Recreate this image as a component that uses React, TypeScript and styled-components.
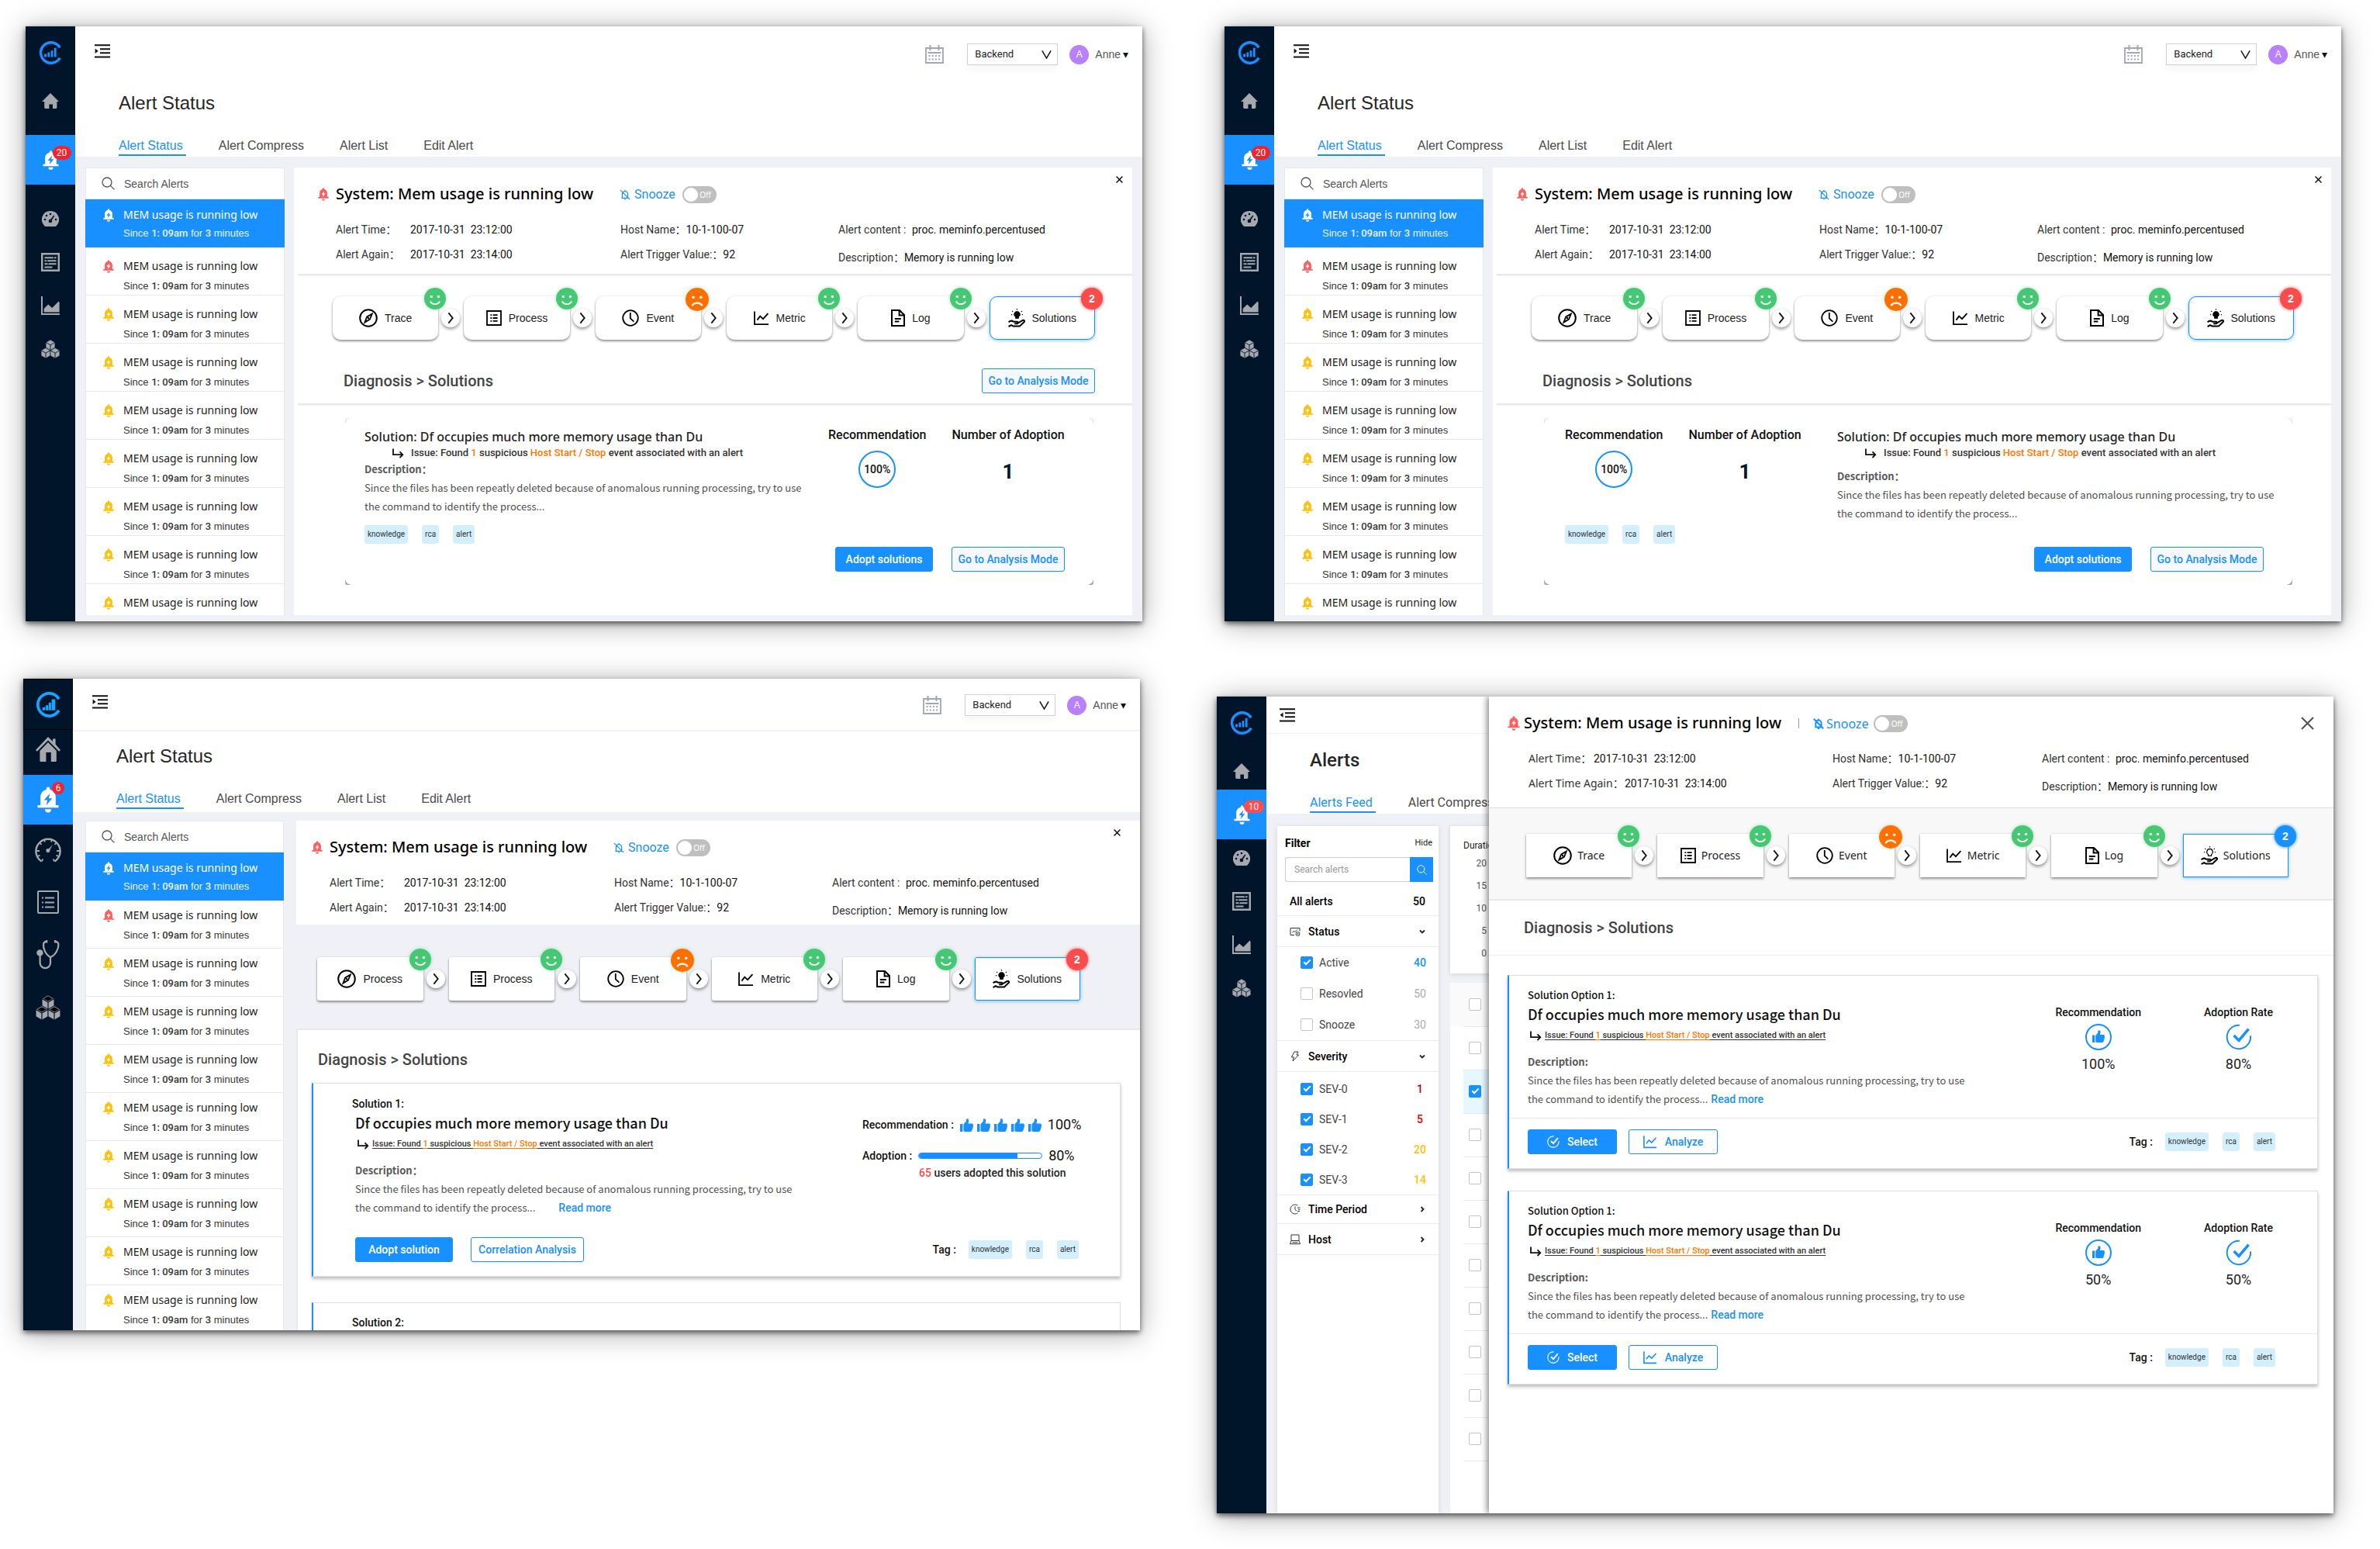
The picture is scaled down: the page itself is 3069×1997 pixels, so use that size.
import React from "react";
import styled, { createGlobalStyle, css } from "styled-components";

const arial = `"Liberation Sans", Arial, "Noto Sans CJK SC", sans-serif`;
const roboto = `Roboto, "Noto Sans CJK SC", sans-serif`;
const noto = `"Noto Sans", "Noto Sans CJK SC", sans-serif`;
const cjk = `"Noto Sans CJK SC", sans-serif`;

const c = {
  blue: "#1890ff",
  navy: "#001529",
  grey: "#eff1f6",
  line: "#e8e8e8",
  icon: "#a5a9ae",
  green: "#46c773",
  orange: "#ff7800",
  red: "#f94c4c",
  bellRed: "#fb5f5f",
  amber: "#ffc107",
  tag: "#d3effd",
};

const GlobalStyle = createGlobalStyle`
  *, *::before, *::after { box-sizing: border-box; }
  body { margin: 0; background: #fff; color: #222; font-family: ${roboto}; font-size: 14px; }
  h1, h2, h3, p, ul, ol, dl, dd { margin: 0; padding: 0; }
  ul, ol { list-style: none; }
  svg { display: block; flex: none; }
  button, input, select { font: inherit; color: inherit; margin: 0; }
  button { background: none; border: 0; padding: 0; cursor: pointer; }
  a { color: inherit; text-decoration: none; }
`;

/* ---------- icons ---------- */

type IconProps = { size?: number; color?: string; cut?: string };

const BOLT = "M13.6 6.2 8.2 12.4h3.2l-1.1 4.8 5.5-6.5h-3.2z";

const Bell = ({ size = 18, color = c.bellRed, cut = "#fff" }: IconProps) => (
  <svg width={Math.round((size * 20) / 24)} height={size} viewBox="2 0 20 24" aria-hidden="true">
    <path fill={color} d="M12 .3a1.6 1.6 0 0 1 1.6 1.6v.8C17 3.4 19 6.1 19 9.4V17h2.6v2.4H2.4V17H5V9.4c0-3.3 2-6 5.4-6.7v-.8A1.6 1.6 0 0 1 12 .3z" />
    <path fill={color} d="M9 20.8h6a3 3 0 0 1-6 0z" />
    <path fill={cut} d={BOLT} />
  </svg>
);

const Logo = ({ size = 30, color = c.blue, solid = false }: IconProps & { solid?: boolean }) => (
  <svg width={size} height={size} viewBox="0 0 30 30" aria-hidden="true">
    <path d="M27.2 8.4A13.2 13.2 0 1 0 27.2 21.6" fill="none" stroke={color} strokeWidth="3.4" />
    {solid ? (
      <path fill={color} d="M8 18h3.4v-2.4h3.6v-3.2h3.4V8.6H23V21.6H8z" />
    ) : (
      <path fill={color} d="M7.2 16.4h2.8v4H7.200zM11.4 14.6h2.8v5.8h-2.800zM15.6 12.200h2.8v8.200h-2.800zM19.800 8.800h2.800v11.600h-2.800z" />
    )}
    {solid && <path stroke={c.navy} strokeWidth=".6" d="M11.500 15v7M15.100 12v10M18.500 8v14" />}
  </svg>
);

const HomeIcon = () => (
  <svg width="22" height="20" viewBox="0 0 22 20" fill={c.icon} aria-hidden="true">
    <path d="M11 0 22 11h-2.6v7.6c0 .8-.6 1.4-1.4 1.4h-4v-5.6H9.4V20H4.6c-.8 0-1.4-.6-1.4-1.4V11H0z" />
  </svg>
);

const BigHomeIcon = () => (
  <svg width="32" height="32" viewBox="0 0 32 32" fill={c.icon} aria-hidden="true">
    <path d="M16 0 22 6V2.6h3.6V9.6L32 17l-1.8 1.8L16 4.4 1.8 18.8 0 17z" />
    <path d="M16 7 26.8 18v12.4c0 1-.6 1.6-1.6 1.6h-5.4V20h-6.4v12H7c-1 0-1.6-.6-1.6-1.6V18z" />
  </svg>
);

const DashIcon = () => (
  <svg width="22" height="20" viewBox="0 0 22 20" aria-hidden="true">
    <path fill={c.icon} d="M11 0a11 11 0 0 1 8.4 18.2c-.8 1.2-1.6 1.8-2.6 1.8H5.2c-1 0-1.8-.6-2.6-1.8A11 11 0 0 1 11 0z" />
    <g fill={c.navy}>
      <circle cx="11" cy="4" r="1.3" />
      <circle cx="6" cy="6" r="1.3" />
      <circle cx="4" cy="11" r="1.3" />
      <circle cx="18" cy="11" r="1.3" />
      <path d="m15.2 5.4 1.2.9-3.6 5.6a2.2 2.2 0 1 1-1.6-1.1z" />
    </g>
  </svg>
);

const ReportIcon = () => (
  <svg width="24" height="24" viewBox="0 0 24 24" aria-hidden="true">
    <path d="M1.2 1.2h21.6v21.6H1.2z" fill="none" stroke={c.icon} strokeWidth="2.4" />
    <path d="M4.5 6.2h15M4.5 10.2h15M4.5 14.2h15M4.5 18.4h10" stroke={c.icon} strokeWidth="2" />
    <path d="M16.4 5v2.4M9 13v2.4M7.6 9v2.4" stroke={c.navy} strokeWidth="1" />
  </svg>
);

const AreaIcon = () => (
  <svg width="24" height="24" viewBox="0 0 24 24" aria-hidden="true">
    <path d="M1 0v23h23" fill="none" stroke={c.icon} strokeWidth="2" />
    <path fill={c.icon} d="M3.6 20.6V16l5.6-5.4 5 4.4L22.6 6.4 23.6 8v12.6z" />
  </svg>
);

const cube = (x: number, y: number, r: number) => {
  const w = r * 0.87;
  return {
    hex: `M${x} ${y - r}L${x + w} ${y - r / 2}V${y + r / 2}L${x} ${y + r}L${x - w} ${y + r / 2}V${y - r / 2}z`,
    ribs: `M${x} ${y + r}V${y}L${x + w} ${y - r / 2}M${x} ${y}L${x - w} ${y - r / 2}`,
    top: `M${x} ${y - r + 1}L${x + w - 1.5} ${y - r / 2}L${x} ${y - 1}L${x - w + 1.5} ${y - r / 2}z`,
  };
};

const CubesIcon = ({ size = 24, dark = false }: { size?: number; dark?: boolean }) => (
  <svg width={size} height={size} viewBox="0 0 24 24" aria-hidden="true">
    {[cube(12, 6.8, 6.8), cube(6, 17.2, 6.8), cube(18, 17.2, 6.8)].map((q, i) => (
      <g key={i}>
        <path d={q.hex} fill={c.icon} stroke={c.navy} strokeWidth=".6" />
        <path d={q.ribs} fill="none" stroke={c.navy} strokeWidth=".9" />
        {dark && <path d={q.top} fill="#000" />}
      </g>
    ))}
  </svg>
);

const GaugeIcon = () => (
  <svg width="34" height="34" viewBox="0 0 34 34" fill="none" stroke={c.icon} strokeWidth="2.4" aria-hidden="true">
    <path d="M8.5 32.5a15.6 15.6 0 1 1 17 0" />
    <path d="M8.5 32.6l2-3M25.5 32.6l-2-3M2 19h4M32 19h-4M6 8.5l2.6 2.4M28 8.5l-2.6 2.4M12 4.5l1 3M22 4.5l-1 3M3.5 26l3-1.4M30.5 26l-3-1.4" strokeWidth="1.8" />
    <path d="m23 11-5 5.2a2.6 2.6 0 1 0 1.4 1.6z" fill={c.icon} stroke="none" />
  </svg>
);

const ChecklistIcon = () => (
  <svg width="28" height="30" viewBox="0 0 28 30" fill="none" stroke={c.icon} strokeWidth="2" aria-hidden="true">
    <rect x="1" y="1" width="26" height="28" rx="1" />
    <path d="M10 9.4h12M10 15.4h12M10 21.4h12M6 9.4h2M6 15.4h2M6 21.4h2" />
  </svg>
);

const StethoscopeIcon = () => (
  <svg width="30" height="38" viewBox="0 0 30 38" fill="none" stroke={c.icon} strokeWidth="2.2" aria-hidden="true">
    <circle cx="4.4" cy="16.4" r="4.2" fill={c.icon} stroke="none" />
    <path d="M4.6 20v9.4a6.6 6.6 0 0 0 13.4 0V22C11 18.6 8.6 9.4 9 5.4 9.2 3 10.6 2 13 1.6M18 22c7-2.8 10.6-11 10.4-16.4C28.2 3 26.6 2 24.2 1.6" />
    <path d="M13.2 0v3.4M24 0v3.4" />
  </svg>
);

const MenuIcon = ({ flip = false }: { flip?: boolean }) => (
  <svg width="20" height="18" viewBox="0 0 20 18" aria-hidden="true">
    <path d="M0 1.2h20M7 6.2h13M7 11.2h13M0 16.6h20" stroke="#111" strokeWidth="2" />
    <path d={flip ? "M4.6 5.6v6.4L.6 8.8z" : "M.6 5.6v6.4l4-3.2z"} fill="#111" />
  </svg>
);

const CalendarIcon = () => (
  <svg width="24" height="24" viewBox="0 0 24 24" fill="none" stroke="#a0a7b0" strokeWidth="1.8" aria-hidden="true">
    <path d="M1 4h22v19H1zM3.5 10h17" />
    <path d="M6.5 0v7M17.5 0v7" strokeWidth="2" />
    <path d="M4.5 14h15M4.5 18.500h15" strokeWidth="2" strokeDasharray="2 2.2" />
  </svg>
);

const Chevron = ({ dir = "down", size = 13 }: { dir?: "down" | "right"; size?: number }) => (
  <svg width={size} height={size} viewBox="0 0 12 12" fill="none" stroke="#111" strokeWidth="1.4" aria-hidden="true">
    <path d={dir === "down" ? "m.8 1.2 5.200 9 5.200-9" : "m4 1 4 5-4 5"} />
  </svg>
);

const SmallChevron = ({ dir }: { dir: "down" | "right" }) => (
  <svg width="8" height="8" viewBox="0 0 8 8" fill="none" stroke="#222" strokeWidth="1.8" aria-hidden="true">
    <path d={dir === "down" ? "m1 2.5 3 3 3-3" : "m2.5 1 3 3-3 3"} />
  </svg>
);

const SearchIcon = ({ size = 17, color = "#555" }: IconProps) => (
  <svg width={size} height={size} viewBox="0 0 17 17" fill="none" stroke={color} strokeWidth="1.3" aria-hidden="true">
    <circle cx="7" cy="7" r="6" />
    <path d="m11.4 11.4 5 5" />
  </svg>
);

const SnoozeIcon = ({ bold = false }: { bold?: boolean }) => (
  <svg width="14" height="14" viewBox="0 0 14 14" fill="none" stroke={c.blue} strokeWidth={bold ? 2 : 1.2} aria-hidden="true">
    <path d="M2.4 11.4h9.2M3.4 11V6.2A3.6 3.6 0 0 1 10.600 6.200V11M7 2.6V.8M5.800 13h2.400M.8.8l12.400 12.400" />
  </svg>
);

const CompassIcon = () => (
  <svg width="24" height="24" viewBox="0 0 24 24" fill="none" stroke="#000" strokeWidth="2" aria-hidden="true">
    <circle cx="12" cy="12" r="10.8" />
    <path d="M16.8 6.6 14 13.600l-6.600 4 2.800-7.200z" strokeWidth="1.8" />
    <circle cx="12" cy="12" r="1.2" fill="#000" stroke="none" />
  </svg>
);

const ProcessIcon = () => (
  <svg width="20" height="20" viewBox="0 0 20 20" fill="none" stroke="#000" strokeWidth="1.8" aria-hidden="true">
    <path d="M1 1h18v18H1z" />
    <path d="M8.6 6.2h6M8.6 10h6M8.6 13.8h6M5.4 6.2h1.8M5.4 10h1.8M5.4 13.8h1.8" />
  </svg>
);

const ClockIcon = () => (
  <svg width="22" height="22" viewBox="0 0 22 22" fill="none" stroke="#000" strokeWidth="1.8" aria-hidden="true">
    <circle cx="11" cy="11" r="9.8" />
    <path d="M10.8 4v7.4l4.6 4.2" />
  </svg>
);

const LineIcon = ({ size = 20, color = "#000" }: IconProps) => (
  <svg width={size} height={size} viewBox="0 0 20 20" fill="none" stroke={color} strokeWidth="1.8" aria-hidden="true">
    <path d="M1 1.5v16.7h18M4.4 12.6l3.8-5 3.8 3.6 6.4-7" />
  </svg>
);

const LogIcon = () => (
  <svg width="18" height="22" viewBox="0 0 18 22" fill="none" stroke="#000" strokeWidth="2" aria-hidden="true">
    <path d="M1 1h10l6 6v14H1zM10.6 1v6.4H17M4.8 12h8M4.8 15.6h5.6" />
  </svg>
);

const SolutionIcon = ({ outline = false }: { outline?: boolean }) => (
  <svg width="22" height="24" viewBox="0 0 22 24" fill="none" stroke="#000" strokeWidth="1.6" aria-hidden="true">
    <path d="M11.5 3.4a3.9 3.9 0 0 1 2 7.2v1.8h-4v-1.800a3.900 3.900 0 0 1 2-7.200z" fill={outline ? "none" : "#000"} strokeWidth={outline ? 1.2 : 0.8} />
    <path d="M11.5 0v1.6M5.2 3l1 .8M17.8 3l-1 .8M4 7.6h1.2M17.8 7.6H19" strokeWidth="1.2" />
    <path d="M.6 17.4c2-2 4.2-2.4 6.4-.6h4.4c1.6 0 1.6 2.4 0 2.4H8.2M12.4 18.6l6.4-3.6c1.8-.8 3 1 1.6 2.2L15 22.4H6.4L4 21.2.6 23" strokeWidth="2" />
  </svg>
);

const Face = ({ sad = false }: { sad?: boolean }) => (
  <svg width={sad ? 30 : 28} height={sad ? 30 : 28} viewBox="0 0 28 28" role="img" aria-label={sad ? "Unhealthy" : "Healthy"}>
    <circle cx="14" cy="14" r="14" fill={sad ? "#ff6f00" : c.green} />
    <g fill="#fff">
      <circle cx="9.2" cy="11.4" r="1.7" />
      <circle cx="18.4" cy="11.4" r="1.7" />
    </g>
    <path d={sad ? "M7.8 21.6c2.6-4.400 9.800-4.400 12.400 0" : "M7.8 17.4c2.6 4.800 9.800 4.800 12.400 0"} fill="none" stroke="#fff" strokeWidth="2" />
  </svg>
);

const ReturnIcon = () => (
  <svg width="16" height="13" viewBox="0 0 16 13" fill="none" stroke="#111" strokeWidth="1.8" aria-hidden="true">
    <path d="M2 .5v7.700h12M10.500 4.400l3.800 3.800-3.800 3.800" />
  </svg>
);

const Thumb = ({ size = 16 }: IconProps) => (
  <svg width={size} height={size} viewBox="0 0 16 16" fill={c.blue} aria-hidden="true">
    <path d="M0 6.6h3.2V16H0zM4.2 7l3.200-3.800V.8C8.600-.4 10.600.4 10.600 2.400c0 1.400-.4 2.600-.8 3.600h4.800c1.600.4 1.600 2 1 2.800.6.800.4 2-.3 2.500.3.900 0 1.700-.6 2.100.1 1.600-.7 2.600-2.300 2.600H6.200c-.8 0-1.400-.4-2-.8z" />
  </svg>
);

const ThumbCircle = () => (
  <svg width="34" height="34" viewBox="0 0 34 34" aria-hidden="true">
    <circle cx="17" cy="17" r="16" fill="none" stroke={c.blue} strokeWidth="2" />
    <g transform="translate(9 8)">
      <Thumb />
    </g>
  </svg>
);

const CheckCircle = ({ size = 34, color = c.blue, w = 2 }: IconProps & { w?: number }) => (
  <svg width={size} height={size} viewBox="0 0 34 34" fill="none" stroke={color} aria-hidden="true">
    <path d="M18 1.8A15.2 15.2 0 1 0 32 15.4" strokeWidth={w} />
    <path d="m10.6 15 6.4 6.400L29.600 6.600" strokeWidth={w + 1.6} />
  </svg>
);

const CloseIcon = ({ size = 17, color = "#555", w = 2.2 }: IconProps & { w?: number }) => (
  <svg width={size} height={size} viewBox="0 0 17 17" stroke={color} strokeWidth={w} aria-hidden="true">
    <path d="m1 1 15 15M16 1 1 16" />
  </svg>
);

const StatusIcon = () => (
  <svg width="14" height="14" viewBox="0 0 14 14" fill="none" stroke="#333" aria-hidden="true">
    <path d="M6 11.5H1v-9h12v4M3.5 8.500l2-2.500L7 7.500l3-3" />
    <circle cx="10.5" cy="10" r="2.5" />
    <circle cx="10.5" cy="10" r=".6" fill="#333" />
  </svg>
);

const BoltIcon = () => (
  <svg width="14" height="14" viewBox="0 0 14 14" fill="none" stroke="#333" aria-hidden="true">
    <path d="M6 1h5L9 5h2.5L4 13l1.5-5H2.500z" />
  </svg>
);

const PeriodIcon = () => (
  <svg width="14" height="14" viewBox="0 0 14 14" fill="none" stroke="#333" aria-hidden="true">
    <path d="M10.5 2.2A6 6 0 1 0 10.500 11.800M7 3.500v4l2 1.500M10 5h3.500M11 7.200h2.500M10 9.500h3" />
  </svg>
);

const HostIcon = () => (
  <svg width="14" height="14" viewBox="0 0 14 14" fill="none" stroke="#333" aria-hidden="true">
    <path d="M2 1h10v7.5H2zM2 8.500l-1.500 4.200h13L12 8.500M3.500 10.800h7" />
  </svg>
);

/* ---------- board and frames ---------- */

const Board = styled.main`
  display: flex;
  flex-direction: column;
  gap: 74px;
  padding: 34px 0 45px;
  min-width: 2800px;
`;

const BoardRow = styled.div<{ $left: number; $right: number; $gap: number }>`
  display: flex;
  align-items: flex-start;
  gap: ${(p) => p.$gap}px;
  padding: 0 ${(p) => p.$right}px 0 ${(p) => p.$left}px;
`;

const Frame = styled.section<{ $drop?: number }>`
  display: flex;
  flex: 1;
  min-width: 0;
  margin-top: ${(p) => p.$drop ?? 0}px;
  background: #fff;
  box-shadow: 0 3px 7px rgba(0, 0, 0, 0.6), 0 4px 34px rgba(0, 0, 0, 0.35);
`;

const Side = styled.nav`
  display: flex;
  flex-direction: column;
  flex: none;
  width: 64px;
  background: ${c.navy};
`;

const LogoBox = styled.a<{ $h: number; $boxed?: boolean }>`
  display: flex;
  align-items: center;
  justify-content: center;
  height: ${(p) => p.$h}px;
  padding-bottom: ${(p) => (p.$boxed ? 0 : 4)}px;
  border: ${(p) => (p.$boxed ? "1px solid #000" : "0")};
`;

const SideItem = styled.a<{ $h?: number; $active?: boolean }>`
  display: flex;
  align-items: center;
  justify-content: center;
  height: ${(p) => p.$h ?? 48}px;
  background: ${(p) => (p.$active ? c.blue : "none")};
`;

const SideGroup = styled.div<{ $top: number; $gap: number }>`
  display: flex;
  flex-direction: column;
  gap: ${(p) => p.$gap}px;
  padding-top: ${(p) => p.$top}px;
`;

const SideSpace = styled.div<{ $h: number }>`
  height: ${(p) => p.$h}px;
`;

const BellWrap = styled.span`
  position: relative;
  display: block;
`;

const Count = styled.span<{ $w: number; $h: number; $bg?: string }>`
  position: absolute;
  top: -6px;
  left: ${(p) => (p.$w < 20 ? 19 : 13)}px;
  width: ${(p) => p.$w}px;
  height: ${(p) => p.$h}px;
  border-radius: 9px;
  background: ${(p) => p.$bg ?? "#f5222d"};
  color: #fff;
  font: 12px/${(p) => p.$h}px ${roboto};
  text-align: center;
`;

const Main = styled.div`
  display: flex;
  flex-direction: column;
  flex: 1;
  min-width: 0;
`;

const TopBar = styled.header<{ $h: number; $line?: number; $left?: number }>`
  display: flex;
  align-items: center;
  height: ${(p) => p.$h}px;
  padding: 2px 18px 0 ${(p) => p.$left ?? 25}px;
  border-bottom: ${(p) => p.$line ?? 0}px solid ${c.grey};
`;

const MenuButton = styled.button<{ $lift: number }>`
  margin-right: auto;
  padding-bottom: ${(p) => p.$lift}px;
`;

const Picker = styled.label`
  display: grid;
  align-items: center;
  width: 117px;
  margin-left: 30px;
  box-shadow: 0 6px 10px rgba(0, 0, 0, 0.04);
  > * { grid-area: 1 / 1; }
  > svg { justify-self: end; margin-right: 8px; pointer-events: none; }
`;

const PickerSelect = styled.select`
  appearance: none;
  height: 28px;
  padding: 0 9px;
  border: 1px solid #d0d0d0;
  border-radius: 0;
  background: #fff;
  font: 13px/26px ${roboto};
`;

const User = styled.button`
  display: flex;
  align-items: center;
  gap: 8px;
  margin-left: 15px;
  font: 14px/20px ${arial};
  color: #555;
  small { margin-left: -5px; font-size: 14px; color: #111; }
`;

const Avatar = styled.span`
  width: 25px;
  height: 25px;
  border-radius: 50%;
  background: #b880fb;
  color: #fff;
  font: 12px/24px ${arial};
  text-align: center;
`;

const Heading = styled.div<{ $top: number; $bottom: number; $font: string; $weight: number }>`
  padding: ${(p) => p.$top}px 0 ${(p) => p.$bottom}px 56px;
  font-family: ${(p) => p.$font};
  h1 {
    margin: 0 0 28px;
    font-size: 24px;
    line-height: 32px;
    font-weight: ${(p) => p.$weight};
    color: #262626;
  }
`;

const Tabs = styled.nav`
  display: flex;
  gap: 42px;
  font-size: 16px;
  line-height: 22px;
  color: #4a4a4a;
  white-space: nowrap;
`;

const Tab = styled.a<{ $on?: boolean }>`
  border-bottom: 2px solid ${(p) => (p.$on ? c.blue : "transparent")};
  color: ${(p) => (p.$on ? c.blue : "inherit")};
  padding-right: 4px;
`;

const Body = styled.div<{ $pad: string; $gap: number }>`
  display: flex;
  flex: 1;
  gap: ${(p) => p.$gap}px;
  padding: ${(p) => p.$pad};
  background: ${c.grey};
`;

/* ---------- alert list ---------- */

const ListCol = styled.aside<{ $w: number }>`
  display: flex;
  flex-direction: column;
  flex: 0 0 ${(p) => p.$w}px;
  contain: size;
  overflow: hidden;
  background: #fff;
`;

const SearchBox = styled.label`
  display: flex;
  align-items: center;
  gap: 12px;
  flex: none;
  height: 41px;
  padding: 0 20px;
  border: 1px solid ${c.line};
`;

const SearchInput = styled.input`
  flex: 1;
  min-width: 0;
  border: 0;
  padding: 0;
  outline: none;
  background: none;
  font: 14px/20px ${arial};
  &::placeholder { color: #555; opacity: 1; }
`;

const AlertItem = styled.button<{ $on?: boolean; $pad: number }>`
  display: grid;
  grid-template-columns: 14px 1fr;
  column-gap: 12px;
  row-gap: ${(p) => (p.$on ? 4 : 6)}px;
  align-content: start;
  align-items: center;
  width: 100%;
  height: 62px;
  padding: ${(p) => (p.$on ? 10 : p.$pad)}px 0 0 22px;
  border: 1px solid ${c.line};
  border-top: 0;
  text-align: left;
  color: #222;
  ${(p) => p.$on && css`background: ${c.blue}; border-color: ${c.blue}; color: #fff;`}
`;

const AlertName = styled.span`
  font: 14px/20px ${noto};
  white-space: nowrap;
`;

const AlertSince = styled.span`
  grid-column: 2;
  font: 13px/20px ${arial};
  white-space: nowrap;
  opacity: 0.9;
  b { font: 500 13px/20px ${roboto}; }
`;

const AlertList = ({ rows, pad, width, openEnd = false }: { rows: number; pad: number; width: number; openEnd?: boolean }) => (
  <ListCol $w={width}>
    <SearchBox>
      <SearchIcon />
      <SearchInput type="search" placeholder="Search Alerts" aria-label="Search Alerts" />
    </SearchBox>
    <ul>
      {Array.from({ length: rows }, (_, i) => (
        <li key={i}>
          <AlertItem $on={i === 0} $pad={pad}>
            <Bell size={17} color={i === 0 ? "#fff" : i === 1 ? c.bellRed : c.amber} cut={i === 0 ? c.blue : "#fff"} />
            <AlertName>MEM usage is running low</AlertName>
            {!(openEnd && i === rows - 1) && (
              <AlertSince>
                Since <b>1: 09am</b> for <b>3</b> minutes
              </AlertSince>
            )}
          </AlertItem>
        </li>
      ))}
    </ul>
  </ListCol>
);

/* ---------- alert summary ---------- */

const Panel = styled.div`
  flex: 1;
  min-width: 0;
  background: #fff;
`;

const Summary = styled.div<{ $left: number; $right: number; $bottom: number; $line?: boolean }>`
  padding: 8px ${(p) => p.$right}px ${(p) => p.$bottom}px ${(p) => p.$left}px;
  background: #fff;
  ${(p) => p.$line && css`border-bottom: 1px solid #dcdcdc;`}
`;

const SummaryTop = styled.div`
  display: flex;
  align-items: flex-start;
`;

const SummaryTitle = styled.div<{ $gap: number }>`
  display: flex;
  align-items: center;
  flex: 1;
  gap: ${(p) => p.$gap}px;
  padding-top: 12px;
  h2 {
    font: 500 20px/28px ${noto};
    color: #000;
    white-space: nowrap;
  }
`;

const Bar = styled.span`
  width: 1px;
  height: 13px;
  margin: 0 13px 0 17px;
  background: #999;
`;

const Snooze = styled.label<{ $font: string; $gap: number; $left: number }>`
  display: flex;
  align-items: center;
  gap: ${(p) => p.$gap}px;
  padding-top: 2px;
  margin-left: ${(p) => p.$left}px;
  font: 16px/24px ${(p) => p.$font};
  color: ${c.blue};
`;

const SwitchBox = styled.span`
  display: grid;
  align-items: center;
  margin-left: 4px;
  > * { grid-area: 1 / 1; }
  > span { justify-self: end; margin-right: 7px; font: 10px/22px ${noto}; color: #fff; pointer-events: none; }
`;

const Switch = styled.input`
  appearance: none;
  display: flex;
  align-items: center;
  width: 44px;
  height: 22px;
  padding: 0 2px;
  border-radius: 11px;
  background: #bfbfbf;
  &::before { content: ""; width: 18px; height: 18px; border-radius: 50%; background: #fff; }
`;

const Close = styled.button<{ $drawer?: boolean }>`
  display: flex;
  padding: 3px 0;
  ${(p) => p.$drawer && css`padding: 18px 13px 0 0;`}
`;

const Facts = styled.dl<{ $cols: string; $left: number }>`
  display: grid;
  grid-template-columns: ${(p) => p.$cols};
  padding: 22px 0 0 ${(p) => p.$left}px;
  white-space: nowrap;
`;

const FactCol = styled.div<{ $gap: number }>`
  display: flex;
  flex-direction: column;
  gap: ${(p) => p.$gap}px;
`;

const Fact = styled.div<{ $label?: number; $font?: string }>`
  display: flex;
  font: 14px/20px ${roboto};
  color: #262626;
  dt { min-width: ${(p) => p.$label ?? 0}px; font-family: ${(p) => p.$font ?? roboto}; color: #333; }
  dd { white-space: pre; color: #111; }
`;

const AlertSummary = ({ left, right = 12, bottom, drawer = false }: { left: number; right?: number; bottom: number; drawer?: boolean }) => (
  <Summary $left={left} $right={right} $bottom={bottom} $line={drawer}>
    <SummaryTop>
      <SummaryTitle $gap={drawer ? 5 : 9}>
        <Bell size={drawer ? 19 : 17} />
        <h2>System: Mem usage is running low</h2>
        {drawer && <Bar />}
        <Snooze $font={drawer ? noto : roboto} $gap={drawer ? 3 : 5} $left={drawer ? 0 : 25}>
          <SnoozeIcon bold={drawer} />
          Snooze
          <SwitchBox>
            <Switch type="checkbox" role="switch" aria-label="Snooze" />
            <span>Off</span>
          </SwitchBox>
        </Snooze>
      </SummaryTitle>
      <Close aria-label="Close" $drawer={drawer}>
        {drawer ? <CloseIcon /> : <CloseIcon size={9} color="#111" w={2.8} />}
      </Close>
    </SummaryTop>
    <Facts $left={drawer ? 27 : 23} $cols={drawer ? "392px 270px 1fr" : "367px 281px 1fr"}>
      <FactCol $gap={12}>
        <Fact $label={drawer ? 84 : 96} $font={drawer ? noto : undefined}>
          <dt>Alert Time：</dt>
          <dd>{"2017-10-31  23:12:00"}</dd>
        </Fact>
        <Fact $label={drawer ? 124 : 96} $font={drawer ? noto : undefined}>
          <dt>{drawer ? "Alert Time Again：" : "Alert Again："}</dt>
          <dd>{"2017-10-31  23:14:00"}</dd>
        </Fact>
      </FactCol>
      <FactCol $gap={12}>
        <Fact><dt>Host Name：</dt><dd>10-1-100-07</dd></Fact>
        <Fact><dt>Alert Trigger Value:：</dt><dd>92</dd></Fact>
      </FactCol>
      <FactCol $gap={16}>
        <Fact $label={95}><dt>Alert content :</dt><dd>proc. meminfo.percentused</dd></Fact>
        <Fact $label={84}><dt>Description：</dt><dd>Memory is running low</dd></Fact>
      </FactCol>
    </Facts>
  </Summary>
);

/* ---------- diagnosis steps ---------- */

const StepBand = styled.ol<{ $pad: string; $bg?: string; $line?: boolean }>`
  display: flex;
  align-items: center;
  padding: ${(p) => p.$pad};
  background: ${(p) => p.$bg ?? "none"};
  ${(p) => p.$line && css`border-bottom: 2px solid ${c.line};`}
`;

const StepItem = styled.li`
  position: relative;
  flex: 1;
`;

const StepCard = styled.button<{ $r: number; $on?: boolean; $noto?: boolean }>`
  display: flex;
  align-items: center;
  justify-content: center;
  gap: ${(p) => (p.$noto ? 7 : 9)}px;
  width: 100%;
  height: 56px;
  border-radius: ${(p) => p.$r}px;
  background: #fff;
  border: ${(p) => (p.$on ? `1px solid ${c.blue}` : "0")};
  box-shadow: ${(p) => (p.$on ? "0 1px 4px rgba(24,144,255,.55)" : "0 2px 3px rgba(0,0,0,.4), 0 0 2px rgba(0,0,0,.15)")};
  font: 14px/20px ${(p) => (p.$noto ? noto : arial)};
  color: #222;
`;

const StepMark = styled.span`
  position: absolute;
  top: -11px;
  right: -10px;
  border-radius: 50%;
  box-shadow: 0 0 4px rgba(70, 199, 115, 0.5);
`;

const StepCount = styled(StepMark)<{ $bg: string }>`
  width: 28px;
  height: 28px;
  background: ${(p) => p.$bg};
  box-shadow: 0 0 4px ${(p) => p.$bg};
  color: #fff;
  font: bold 14px/28px ${arial};
  text-align: center;
`;

const StepArrow = styled.li`
  display: flex;
  align-items: center;
  justify-content: center;
  flex: none;
  width: 24px;
  height: 24px;
  margin: 0 5px 0 4px;
  border-radius: 50%;
  background: #fff;
  box-shadow: 0 2px 4px rgba(0, 0, 0, 0.45);
`;

const Steps = ({ pad, radius, first = "Trace", drawer = false }: { pad: string; radius: number; first?: string; drawer?: boolean }) => {
  const items: [string, React.ReactNode][] = [
    [first, <CompassIcon key="i" />],
    ["Process", <ProcessIcon key="i" />],
    ["Event", <ClockIcon key="i" />],
    ["Metric", <LineIcon key="i" />],
    ["Log", <LogIcon key="i" />],
    ["Solutions", <SolutionIcon key="i" outline={drawer} />],
  ];
  return (
    <StepBand $pad={pad} $bg={drawer ? "#f8f8f8" : undefined} $line={drawer}>
      {items.map(([label, icon], i) => (
        <React.Fragment key={i}>
          {i > 0 && (
            <StepArrow aria-hidden="true">
              <Chevron dir="right" size={16} />
            </StepArrow>
          )}
          <StepItem>
            <StepCard $r={radius} $on={i === 5} $noto={drawer}>
              {icon}
              {label}
            </StepCard>
            {i < 5 ? (
              <StepMark><Face sad={i === 2} /></StepMark>
            ) : (
              <StepCount $bg={drawer ? c.blue : c.red}>2</StepCount>
            )}
          </StepItem>
        </React.Fragment>
      ))}
    </StepBand>
  );
};

/* ---------- shared solution pieces ---------- */

const Rule = styled.hr<{ $left?: number }>`
  height: 2px;
  margin: 0 0 0 ${(p) => p.$left ?? 0}px;
  border: 0;
  background: ${c.line};
  box-shadow: 0 1px 2px rgba(0, 0, 0, 0.06);
`;

const Diagnosis = styled.div<{ $pad: string; $line?: boolean }>`
  display: flex;
  align-items: center;
  justify-content: space-between;
  padding: ${(p) => p.$pad};
  ${(p) => p.$line && css`border-bottom: 1px solid #ececec;`}
  h2 { font: 500 20px/32px ${roboto}; color: #444; }
`;

const Button = styled.button<{ $primary?: boolean; $w: number; $bg?: string }>`
  display: inline-flex;
  align-items: center;
  justify-content: center;
  gap: 10px;
  width: ${(p) => p.$w}px;
  height: 32px;
  border: 1px solid ${c.blue};
  border-radius: 3px;
  background: ${(p) => (p.$primary ? c.blue : p.$bg ?? "#fff")};
  color: ${(p) => (p.$primary ? "#fff" : c.blue)};
  font: 500 14px/20px ${roboto};
  white-space: nowrap;
`;

const Buttons = styled.div<{ $gap: number; $end?: boolean }>`
  display: flex;
  gap: ${(p) => p.$gap}px;
  justify-content: ${(p) => (p.$end ? "flex-end" : "flex-start")};
`;

const TagRow = styled.ul`
  display: flex;
  align-items: center;
  gap: 18px;
`;

const TagItem = styled.li`
  padding: 0 4px;
  border-radius: 3px;
  background: ${c.tag};
  color: #333;
  font: 10px/24px ${roboto};
`;

const TagLabel = styled.div`
  display: flex;
  align-items: center;
  gap: 16px;
  font: 500 14px/20px ${roboto};
  color: #111;
`;

const Tags = () => (
  <TagRow>
    {["knowledge", "rca", "alert"].map((t) => (
      <TagItem key={t}>{t}</TagItem>
    ))}
  </TagRow>
);

const underline = css`
  text-decoration: underline;
  text-underline-offset: 2px;
`;

const IssueLine = styled.p<{ $left: number; $size: number; $underline?: boolean }>`
  display: flex;
  align-items: center;
  gap: ${(p) => (p.$underline ? 4 : 9)}px;
  padding-left: ${(p) => p.$left}px;
  font: 500 ${(p) => p.$size}px/18px ${roboto};
  color: #333;
  white-space: nowrap;
  span { ${(p) => p.$underline && underline} }
  em { font-style: normal; color: ${c.orange}; ${(p) => p.$underline && underline} }
`;

const Issue = (p: { left: number; size: number; underline?: boolean }) => (
  <IssueLine $left={p.left} $size={p.size} $underline={p.underline}>
    <ReturnIcon />
    <span>Issue: Found <em>1</em> suspicious <em>Host Start / Stop</em> event associated with an alert</span>
  </IssueLine>
);

const DescLabel = styled.p<{ $top: number }>`
  padding-top: ${(p) => p.$top}px;
  font: bold 13px/20px ${cjk};
  color: #595959;
`;

const DescText = styled.p`
  padding-top: 2px;
  font: 400 13px/24px ${cjk};
  color: #505050;
  white-space: nowrap;
`;

const More = styled.a<{ $gap: number }>`
  margin-left: ${(p) => p.$gap}px;
  color: ${c.blue};
  font: 500 14px/16px ${roboto};
`;

/* ---------- plain solution card ---------- */

const CardClip = styled.div`
  margin: 17px 50px 39px 66px;
  overflow: hidden;
`;

const PlainCard = styled.article<{ $cols: string; $pad: string }>`
  display: grid;
  grid-template-columns: ${(p) => p.$cols};
  min-height: 215px;
  padding: ${(p) => p.$pad};
  border-radius: 8px;
  background: #fff;
  box-shadow: 0 2px 4px rgba(0, 0, 0, 0.7);
`;

const Stack = styled.div`
  display: flex;
  flex-direction: column;
  min-width: 0;
`;

const Spread = styled(Stack)`
  justify-content: space-between;
`;

const PlainTitle = styled.h3`
  font: 500 16px/24px ${noto};
  color: #222;
  white-space: nowrap;
`;

const Metrics = styled.div<{ $gap: number }>`
  display: flex;
  gap: ${(p) => p.$gap}px;
`;

const Metric = styled.div<{ $size?: number }>`
  display: flex;
  flex-direction: column;
  align-items: center;
  font: 500 ${(p) => p.$size ?? 16}px/20px ${roboto};
  color: #111;
  white-space: nowrap;
`;

const Ring = styled.span`
  width: 48px;
  height: 48px;
  margin-top: 10px;
  border: 2px solid ${c.blue};
  border-radius: 50%;
  font: 500 14px/44px ${roboto};
  text-align: center;
`;

const BigNumber = styled.b`
  margin-top: 21px;
  font: bold 26px/32px ${roboto};
  color: ${c.navy};
`;

const TagsBelow = styled.div<{ $top: number }>`
  padding-top: ${(p) => p.$top}px;
`;

const PlainMetrics = () => (
  <Metrics $gap={33}>
    <Metric>Recommendation<Ring>100%</Ring></Metric>
    <Metric>Number of Adoption<BigNumber>1</BigNumber></Metric>
  </Metrics>
);

const PlainText = ({ loose = false }: { loose?: boolean }) => (
  <div>
    <PlainTitle>Solution: Df occupies much more memory usage than Du</PlainTitle>
    <Issue left={35} size={13} />
    <DescLabel $top={loose ? 11 : 2}>Description：</DescLabel>
    <DescText>
      Since the files has been repeatly deleted because of anomalous running processing, try to use
      <br />
      the command to identify the process...
    </DescText>
  </div>
);

const PlainButtons = () => (
  <Buttons $gap={24} $end>
    <Button $w={126} $primary>Adopt solutions</Button>
    <Button $w={146} $bg="#f5f8fe">Go to Analysis Mode</Button>
  </Buttons>
);

const Header = ({ bar, line, top, bottom }: { bar: number; line?: number; top: number; bottom: number }) => (
  <>
    <TopBar $h={bar} $line={line}>
      <MenuButton $lift={9} aria-label="Toggle menu"><MenuIcon /></MenuButton>
      <CalendarIcon />
      <Picker>
        <PickerSelect aria-label="Team" defaultValue="Backend">
          <option>Backend</option>
        </PickerSelect>
        <Chevron />
      </Picker>
      <User><Avatar>A</Avatar>Anne <small>▾</small></User>
    </TopBar>
    <Heading $top={top} $bottom={bottom} $font={arial} $weight={400}>
      <h1>Alert Status</h1>
      <Tabs>
        <Tab href="#status" $on>Alert Status</Tab>
        <Tab href="#compress">Alert Compress</Tab>
        <Tab href="#list">Alert List</Tab>
        <Tab href="#edit">Edit Alert</Tab>
      </Tabs>
    </Heading>
  </>
);

const Sidebar = ({ space, count, countBg, countH = 18, countW = 24 }: { space: number; count: string; countBg?: string; countH?: number; countW?: number }) => (
  <Side aria-label="Main">
    <LogoBox href="#top" $h={72} aria-label="Start"><Logo /></LogoBox>
    <SideItem href="#home" aria-label="Home"><HomeIcon /></SideItem>
    <SideSpace $h={space} />
    <SideItem href="#alerts" aria-label="Alerts" $h={64} $active>
      <BellWrap>
        <Bell size={25} color="#fff" cut={c.blue} />
        <Count $w={countW} $h={countH} $bg={countBg}>{count}</Count>
      </BellWrap>
    </SideItem>
    <SideGroup $top={space} $gap={8}>
      <SideItem href="#dashboard" aria-label="Dashboard"><DashIcon /></SideItem>
      <SideItem href="#reports" aria-label="Reports"><ReportIcon /></SideItem>
      <SideItem href="#charts" aria-label="Charts"><AreaIcon /></SideItem>
      <SideItem href="#assets" aria-label="Assets"><CubesIcon /></SideItem>
    </SideGroup>
  </Side>
);

const FitRight = styled.div`
  padding-right: 6px;
`;

const StatusFrame = ({ metricsFirst = false }: { metricsFirst?: boolean }) => (
  <Frame>
    <Sidebar space={20} count="20" />
    <Main>
      <Header bar={70} top={13} bottom={1} />
      <Body $pad="14px 13px 8px" $gap={12}>
        <AlertList rows={9} pad={14} width={257} openEnd />
        <Panel>
          <AlertSummary left={31} bottom={11} />
          <Rule $left={5} />
          <Steps pad="27px 48px 37px 50px" radius={10} />
          <Diagnosis $pad="0 48px 13px 64px">
            <h2>Diagnosis &gt; Solutions</h2>
            {!metricsFirst && <Button $w={146} $bg="#f5f8fe">Go to Analysis Mode</Button>}
          </Diagnosis>
          <Rule $left={5} />
          <CardClip>
            {metricsFirst ? (
              <PlainCard $cols="351px 1fr" $pad="12px 31px 17px 27px">
                <Stack>
                  <PlainMetrics />
                  <TagsBelow $top={48}><Tags /></TagsBelow>
                </Stack>
                <Spread>
                  <PlainText loose />
                  <FitRight><PlainButtons /></FitRight>
                </Spread>
              </PlainCard>
            ) : (
              <PlainCard $cols="1fr 305px" $pad="12px 37px 17px 25px">
                <Stack>
                  <PlainText />
                  <TagsBelow $top={12}><Tags /></TagsBelow>
                </Stack>
                <Spread>
                  <PlainMetrics />
                  <PlainButtons />
                </Spread>
              </PlainCard>
            )}
          </CardClip>
        </Panel>
      </Body>
    </Main>
  </Frame>
);

/* ---------- flow frame ---------- */

const Flow = styled.div`
  display: flex;
  flex-direction: column;
  flex: 1;
  min-width: 0;
`;

const SolutionPanel = styled.div`
  flex: 1;
  padding: 22px 25px 0 18px;
  border: 2px solid ${c.line};
  border-width: 2px 0 0 2px;
  background: #fff;
`;

const SolutionCard = styled.article<{ $cut?: boolean }>`
  border: 1px solid #dedede;
  border-left: 2px solid ${c.blue};
  background: #fff;
  box-shadow: 0 3px 4px rgba(0, 0, 0, 0.25);
  ${(p) => p.$cut && css`border-bottom: 0; box-shadow: none; margin-top: 33px;`}
`;

const CardCols = styled.div<{ $pad: string }>`
  display: flex;
  justify-content: space-between;
  padding: ${(p) => p.$pad};
`;

const Kicker = styled.p<{ $font: string }>`
  font: 500 ${(p) => (p.$font === cjk ? 13 : 14)}px/20px ${(p) => p.$font};
  color: #111;
`;

const CardTitle = styled.h3`
  font: 500 18px/28px ${cjk};
  color: #111;
  white-space: nowrap;
`;

const Indent = styled.div<{ $left: number }>`
  padding-left: ${(p) => p.$left}px;
`;

const IssueGap = styled.div`
  padding: 5px 0 0;
`;

const SolutionText = ({ colon, moreGap }: { colon: string; moreGap: number }) => (
  <>
    <CardTitle>Df occupies much more memory usage than Du</CardTitle>
    <IssueGap><Issue left={2} size={11} underline /></IssueGap>
    <DescLabel $top={15}>Description{colon}</DescLabel>
    <DescText>
      Since the files has been repeatly deleted because of anomalous running processing, try to use
      <br />
      the command to identify the process...
      <More href="#more" $gap={moreGap}>Read more</More>
    </DescText>
  </>
);

const CardFoot = styled.div<{ $pad: string; $line?: boolean }>`
  display: flex;
  align-items: center;
  justify-content: space-between;
  padding: ${(p) => p.$pad};
  ${(p) => p.$line && css`border-top: 1px solid ${c.line};`}
`;

const Scores = styled.div`
  width: 284px;
  padding-top: 25px;
`;

const ScoreRow = styled.div`
  display: flex;
  align-items: center;
  gap: 8px;
  height: 24px;
  margin-bottom: 16px;
  font: 500 14px/20px ${roboto};
  color: #111;
  white-space: nowrap;
  strong { font: 18px/24px ${roboto}; }
`;

const ScoreNote = styled.p`
  margin-top: -16px;
  padding-left: 73px;
  font: 500 14px/20px ${roboto};
  color: #222;
  white-space: nowrap;
  em { font-style: normal; color: ${c.red}; }
`;

const Thumbs = styled.span`
  display: flex;
  gap: 5px;
`;

const Track = styled.span`
  display: block;
  width: 160px;
  height: 8px;
  border: 1px solid ${c.blue};
  border-radius: 4px;
  overflow: hidden;
`;

const Fill = styled.span`
  display: block;
  height: 100%;
  background: ${c.blue};
`;

const FlowFrame = () => {
  const adoption = 80;
  return (
    <Frame>
      <Side aria-label="Main">
        <LogoBox href="#top" $h={66} $boxed aria-label="Start"><Logo size={33} color="#13a8ff" solid /></LogoBox>
        <SideItem href="#home" aria-label="Home" $h={50}><BigHomeIcon /></SideItem>
        <SideSpace $h={8} />
        <SideItem href="#alerts" aria-label="Alerts" $h={64} $active>
          <BellWrap>
            <Bell size={34} color="#fff" cut={c.blue} />
            <Count $w={16} $h={16}>6</Count>
          </BellWrap>
        </SideItem>
        <SideGroup $top={0} $gap={4}>
          <SideItem href="#gauge" aria-label="Dashboard" $h={64}><GaugeIcon /></SideItem>
          <SideItem href="#reports" aria-label="Reports" $h={64}><ChecklistIcon /></SideItem>
          <SideItem href="#health" aria-label="Health" $h={64}><StethoscopeIcon /></SideItem>
          <SideItem href="#assets" aria-label="Assets" $h={64}><CubesIcon size={32} dark /></SideItem>
        </SideGroup>
      </Side>
      <Main>
        <Header bar={68} line={2} top={16} bottom={4} />
        <Body $pad="11px 0 0 16px" $gap={16}>
          <AlertList rows={10} pad={9} width={256} />
          <Flow>
            <AlertSummary left={20} right={25} bottom={8} />
            <Steps pad="42px 77px 36px 27px" radius={3} first="Process" />
            <SolutionPanel>
              <Diagnosis $pad="0 0 14px 8px"><h2>Diagnosis &gt; Solutions</h2></Diagnosis>
              <SolutionCard>
                <CardCols $pad="16px 48px 0 50px">
                  <div>
                    <Kicker $font={roboto}>Solution 1:</Kicker>
                    <Indent $left={4}><SolutionText colon="：" moreGap={30} /></Indent>
                  </div>
                  <Scores>
                    <ScoreRow>
                      Recommendation :
                      <Thumbs role="img" aria-label="5 of 5">
                        {[1, 2, 3, 4, 5].map((n) => <Thumb key={n} size={17} />)}
                      </Thumbs>
                      <strong>100%</strong>
                    </ScoreRow>
                    <ScoreRow>
                      Adoption :
                      <Track role="progressbar" aria-label="Adoption" aria-valuenow={adoption}>
                        <Fill style={{ width: `${adoption}%` }} />
                      </Track>
                      <strong>{adoption}%</strong>
                    </ScoreRow>
                    <ScoreNote><em>65</em> users adopted this solution</ScoreNote>
                  </Scores>
                </CardCols>
                <CardFoot $pad="26px 53px 18px 54px">
                  <Buttons $gap={23}>
                    <Button $w={126} $primary>Adopt solution</Button>
                    <Button $w={146}>Correlation Analysis</Button>
                  </Buttons>
                  <TagLabel>Tag :<Tags /></TagLabel>
                </CardFoot>
              </SolutionCard>
              <SolutionCard $cut>
                <CardCols $pad="15px 48px 0 50px"><Kicker $font={roboto}>Solution 2:</Kicker></CardCols>
              </SolutionCard>
            </SolutionPanel>
          </Flow>
        </Body>
      </Main>
    </Frame>
  );
};

/* ---------- drawer frame ---------- */

const Under = styled.div`
  display: flex;
  flex-direction: column;
  flex: 0 0 287px;
  min-width: 0;
  overflow: hidden;
`;

const Filter = styled.aside`
  flex: 0 0 208px;
  min-width: 0;
  background: #fff;
  box-shadow: 0 1px 6px rgba(0, 0, 0, 0.12);
`;

const FilterTop = styled.div`
  display: flex;
  align-items: center;
  justify-content: space-between;
  padding: 12px 8px 8px 10px;
  h2 { font: bold 14px/20px ${roboto}; color: #000; }
  button { font: 11px/20px ${roboto}; }
`;

const FilterSearch = styled.form`
  display: flex;
  padding: 0 7px 0 10px;
  input {
    flex: 1;
    width: 0;
    min-width: 0;
    height: 32px;
    padding: 0 11px;
    border: 1px solid #ccc;
    border-right: 0;
    border-radius: 3px 0 0 3px;
    font: 12px/20px ${roboto};
  }
  input::placeholder { color: #999; opacity: 1; }
  button {
    display: flex;
    align-items: center;
    justify-content: center;
    width: 30px;
    height: 32px;
    background: ${c.blue};
  }
`;

const FilterHead = styled.div<{ $h: number; $top?: number }>`
  display: flex;
  align-items: center;
  gap: 10px;
  width: 100%;
  height: ${(p) => p.$h}px;
  padding: ${(p) => p.$top ?? 0}px 17px 0 16px;
  border-bottom: 1px solid #ebebeb;
  font: 500 14px/20px ${roboto};
  color: #000;
  > :last-child { margin-left: auto; }
`;

const Option = styled.label<{ $color: string; $bold?: boolean; $h?: number }>`
  display: flex;
  align-items: center;
  gap: 8px;
  height: ${(p) => p.$h ?? 40}px;
  padding: 0 16px 0 30px;
  font: 14px/20px ${roboto};
  color: #444;
  span { margin-left: auto; min-width: 16px; text-align: center; color: ${(p) => p.$color}; font-weight: ${(p) => (p.$bold ? 500 : 400)}; }
`;

const Check = styled.input`
  appearance: none;
  flex: none;
  width: 16px;
  height: 16px;
  border: 1px solid #c4c4c4;
  border-radius: 2px;
  background: #fff;
  display: grid;
  place-items: center;
  &:checked { background: ${c.blue}; border-color: ${c.blue}; }
  &:checked::before {
    content: "";
    width: 9px;
    height: 5px;
    margin-bottom: 3px;
    border: 2px solid #fff;
    border-width: 0 0 2px 2px;
    transform: rotate(-45deg);
  }
`;

const OptionGroup = styled.div<{ $top?: number }>`
  padding-top: ${(p) => p.$top ?? 0}px;
  border-bottom: 1px solid #ebebeb;
`;

const Behind = styled.div`
  display: flex;
  flex-direction: column;
  gap: 12px;
  flex: 1;
  min-width: 0;
`;

const ChartCard = styled.div`
  height: 190px;
  padding: 15px 0 0 17px;
  background: #fff;
  box-shadow: 0 1px 6px rgba(0, 0, 0, 0.14);
  font: 12px/20px ${roboto};
  white-space: nowrap;
`;

const Axis = styled.ul`
  width: 30px;
  li { height: 29px; padding-top: 3px; text-align: right; color: #555; }
`;

const TableWrap = styled.div`
  flex: 1;
  background: #fff;
`;

const RowTable = styled.table`
  width: 100%;
  border-collapse: collapse;
  th, td { height: 56px; padding: 0 0 0 7px; border-bottom: 1px solid ${c.line}; text-align: left; }
  td:first-child, th:first-child { width: 17px; padding: 0; border: 0; }
  thead { background: #fafafa; }
  tr[data-on="true"] td:last-child { background: #e6f7ff; }
`;

const Drawer = styled.section`
  position: relative;
  flex: 1;
  min-width: 0;
  padding-bottom: 166px;
  background: #fff;
  box-shadow: -2px 0 8px rgba(0, 0, 0, 0.5);
  clip-path: inset(0 0 0 -12px);
`;

const OptionCards = styled.div`
  display: flex;
  flex-direction: column;
  gap: 28px;
  padding: 25px 20px 0 24px;
`;

const RateIcon = styled.span`
  padding: 5px 0 6px;
`;

const Rate = styled.strong`
  font: 18px/24px ${roboto};
  color: #222;
`;

const RateCols = styled(Metrics)`
  padding-top: 22px;
`;

const severities: [string, string, string][] = [
  ["SEV-0", "1", "#a8071a"],
  ["SEV-1", "5", "#e60000"],
  ["SEV-2", "20", c.amber],
  ["SEV-3", "14", c.amber],
];

const DrawerFrame = () => (
  <Frame $drop={23}>
    <Sidebar space={0} count="10" countBg="#ff4d4f" countH={16} countW={26} />
    <Under>
      <TopBar $h={48} $line={1} $left={17}>
        <MenuButton $lift={2} aria-label="Toggle menu"><MenuIcon flip /></MenuButton>
      </TopBar>
      <Heading $top={18} $bottom={1} $font={roboto} $weight={500}>
        <h1>Alerts</h1>
        <Tabs>
          <Tab href="#feed" $on>Alerts Feed</Tab>
          <Tab href="#compress">Alert Compress</Tab>
        </Tabs>
      </Heading>
      <Body $pad="16px 0 0 14px" $gap={15}>
        <Filter>
          <FilterTop><h2>Filter</h2><button>Hide</button></FilterTop>
          <FilterSearch>
            <input type="search" placeholder="Search alerts" aria-label="Search alerts" />
            <button type="button" aria-label="Search"><SearchIcon size={13} color="#fff" /></button>
          </FilterSearch>
          <FilterHead $h={44} $top={6}>All alerts<span>50</span></FilterHead>
          <FilterHead as="button" $h={40}><StatusIcon />Status<SmallChevron dir="down" /></FilterHead>
          <OptionGroup>
            <Option $color={c.blue} $bold><Check type="checkbox" defaultChecked />Active<span>40</span></Option>
            <Option $color="#aaa"><Check type="checkbox" />Resovled<span>50</span></Option>
            <Option $color="#aaa"><Check type="checkbox" />Snooze<span>30</span></Option>
          </OptionGroup>
          <FilterHead as="button" $h={40}><BoltIcon />Severity<SmallChevron dir="down" /></FilterHead>
          <OptionGroup $top={2}>
            {severities.map(([name, n, color]) => (
              <Option key={name} $color={color} $h={39} $bold><Check type="checkbox" defaultChecked />{name}<span>{n}</span></Option>
            ))}
          </OptionGroup>
          <FilterHead as="button" $h={37}><PeriodIcon />Time Period<SmallChevron dir="right" /></FilterHead>
          <FilterHead as="button" $h={40}><HostIcon />Host<SmallChevron dir="right" /></FilterHead>
        </Filter>
        <Behind>
          <ChartCard>
            Duration
            <Axis>{[20, 15, 10, 5, 0].map((n) => <li key={n}>{n}</li>)}</Axis>
          </ChartCard>
          <TableWrap>
            <RowTable>
              <thead>
                <tr><th /><th><Check type="checkbox" aria-label="Select all" /></th></tr>
              </thead>
              <tbody>
                {Array.from({ length: 10 }, (_, i) => (
                  <tr key={i} data-on={i === 1}>
                    <td />
                    <td><Check type="checkbox" aria-label={`Select row ${i + 1}`} defaultChecked={i === 1} /></td>
                  </tr>
                ))}
              </tbody>
            </RowTable>
          </TableWrap>
        </Behind>
      </Body>
    </Under>
    <Drawer>
      <AlertSummary left={24} bottom={17} drawer />
      <Steps pad="33px 58px 28px 48px" radius={0} drawer />
      <Diagnosis $pad="19px 0 19px 45px" $line><h2>Diagnosis &gt; Solutions</h2></Diagnosis>
      <OptionCards>
        {[["100%", "80%"], ["50%", "50%"]].map(([rec, rate], i) => (
          <SolutionCard key={i}>
            <CardCols $pad="15px 57px 12px 24px">
              <div>
                <Kicker $font={cjk}>Solution Option 1:</Kicker>
                <SolutionText colon=":" moreGap={4} />
              </div>
              <RateCols $gap={81}>
                <Metric $size={14}>Recommendation<RateIcon><ThumbCircle /></RateIcon><Rate>{rec}</Rate></Metric>
                <Metric $size={14}>Adoption Rate<RateIcon><CheckCircle /></RateIcon><Rate>{rate}</Rate></Metric>
              </RateCols>
            </CardCols>
            <CardFoot $pad="14px 54px 18px 24px" $line>
              <Buttons $gap={15}>
                <Button $w={115} $primary><CheckCircle size={16} color="#fff" w={2.4} />Select</Button>
                <Button $w={115}><LineIcon size={18} color={c.blue} />Analyze</Button>
              </Buttons>
              <TagLabel>Tag :<Tags /></TagLabel>
            </CardFoot>
          </SolutionCard>
        ))}
      </OptionCards>
    </Drawer>
  </Frame>
);

export default function App() {
  return (
    <>
      <GlobalStyle />
      <Board>
        <BoardRow $left={33} $right={50} $gap={106}>
          <StatusFrame />
          <StatusFrame metricsFirst />
        </BoardRow>
        <BoardRow $left={30} $right={60} $gap={99}>
          <FlowFrame />
          <DrawerFrame />
        </BoardRow>
      </Board>
    </>
  );
}
